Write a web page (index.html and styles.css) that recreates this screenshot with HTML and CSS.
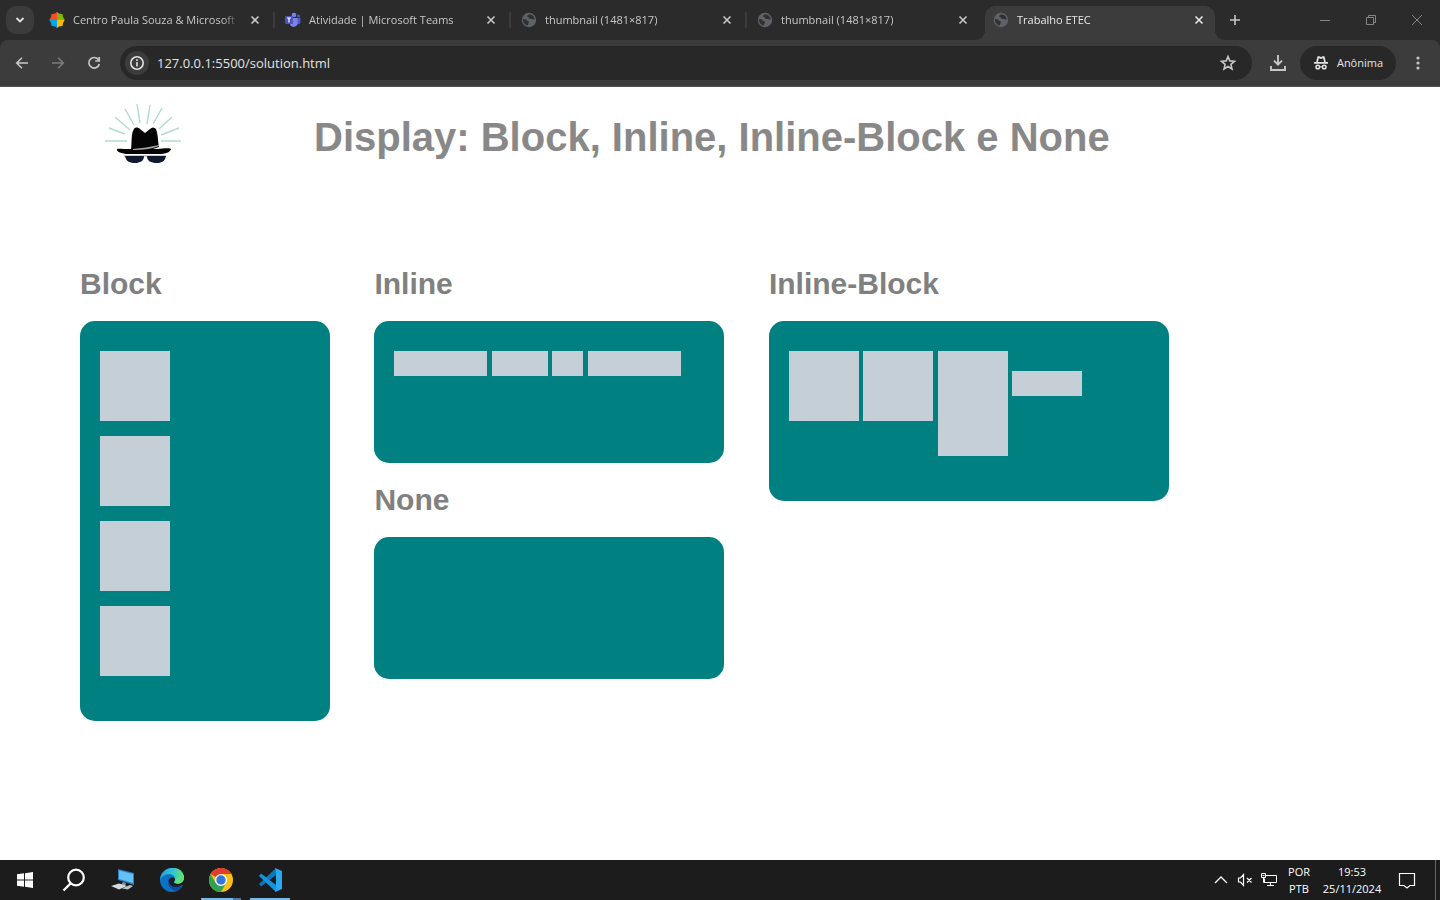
FILE: index.html
```html
<!DOCTYPE html>
<html lang="pt-BR">
<head>
<meta charset="utf-8">
<title>Trabalho ETEC</title>
<link rel="stylesheet" href="styles.css">
</head>
<body>
<svg class="defs" aria-hidden="true">
  <symbol id="close" viewBox="0 0 16 16"><path d="M4.500 4.500l7 7m0-7l-7 7" stroke="currentColor" stroke-width="1.600" fill="none"/></symbol>
  <symbol id="globe" viewBox="0 0 16 16"><circle cx="8" cy="8" r="7.200" fill="#5f6368"/><path d="M2 7c2-.4 3 .2 3.600 1.300.6 1 1.900.5 2.300 1.500.3.900-.6 1.300-.6 2.200l-.4 1.600C4 13.200 1.800 10.500 2 7zM8.300 2.300c-1.200.6-2.500 1.200-2.100 2.200.3.700 1.300.4 1.600 1.200.3.900 1.200 1.500 2.400 1.300 1-.2 1.700.7 3.600.6C13.700 5 11.300 2.400 8.300 2.300z" fill="#303134"/></symbol>
</svg>

<header class="browser">
  <nav class="tabstrip" aria-label="Guias">
    <button class="tab-search" aria-label="Pesquisar guias"><svg width="16" height="16" viewBox="0 0 16 16"><path d="M4.500 6l3.500 3.500L11.500 6" fill="none" stroke="currentColor" stroke-width="1.800"/></svg></button>
    <div class="tabs">
      <div class="tab">
        <svg class="favicon" viewBox="0 0 16 16"><path d="M8 0L5.500 1.700 2.500 2 2 5 .3 8H8z" fill="#f25022"/><path d="M8 0l2.500 1.700 3 .3.500 3 1.700 3H8z" fill="#7fba00"/><path d="M.3 8L2 11l.5 3 3 .3L8 16V8z" fill="#00a4ef"/><path d="M8 16l2.500-1.700 3-.3.500-3 1.700-3H8z" fill="#ffb900"/></svg>
        <span class="tab-title">Centro Paula Souza &amp; Microsoft</span>
        <button class="icon-btn" aria-label="Fechar"><svg><use href="#close"/></svg></button>
      </div>
      <div class="tab">
        <svg class="favicon" viewBox="0 0 16 16"><circle cx="9" cy="3" r="2.300" fill="#7b83eb"/><circle cx="13.500" cy="4" r="1.500" fill="#5059c9"/><path d="M11 6h4.500v4a2.500 2.500 0 0 1-4.500 1.500z" fill="#5059c9"/><path d="M5 6h7.500v5a4 4 0 0 1-7.500 1.800z" fill="#7b83eb"/><rect x="0" y="4" width="8" height="8" rx="1" fill="#4b53bc"/><path d="M2 6h4M4 6v4.500" stroke="#fff" stroke-width="1.200"/></svg>
        <span class="tab-title">Atividade | Microsoft Teams</span>
        <button class="icon-btn" aria-label="Fechar"><svg><use href="#close"/></svg></button>
      </div>
      <div class="tab">
        <svg class="favicon"><use href="#globe"/></svg>
        <span class="tab-title">thumbnail (1481×817)</span>
        <button class="icon-btn" aria-label="Fechar"><svg><use href="#close"/></svg></button>
      </div>
      <div class="tab">
        <svg class="favicon"><use href="#globe"/></svg>
        <span class="tab-title">thumbnail (1481×817)</span>
        <button class="icon-btn" aria-label="Fechar"><svg><use href="#close"/></svg></button>
      </div>
      <div class="tab tab-active">
        <svg class="favicon"><use href="#globe"/></svg>
        <span class="tab-title">Trabalho ETEC</span>
        <button class="icon-btn" aria-label="Fechar"><svg><use href="#close"/></svg></button>
      </div>
    </div>
    <button class="new-tab" aria-label="Nova guia"><svg width="16" height="16" viewBox="0 0 16 16"><path d="M8 3v10M3 8h10" stroke="currentColor" stroke-width="1.600"/></svg></button>
    <div class="window-controls">
      <button aria-label="Minimizar"><svg width="12" height="12" viewBox="0 0 12 12"><path d="M1 6.500h10" stroke="currentColor"/></svg></button>
      <button aria-label="Restaurar"><svg width="12" height="12" viewBox="0 0 12 12"><path d="M1.500 3.500h7v7h-7zM3.500 3.500v-2h7v7h-2" stroke="currentColor" fill="none"/></svg></button>
      <button aria-label="Fechar janela"><svg width="12" height="12" viewBox="0 0 12 12"><path d="M1 1l10 10M11 1L1 11" stroke="currentColor"/></svg></button>
    </div>
  </nav>
  <div class="toolbar">
    <div class="nav-buttons">
      <button aria-label="Voltar"><svg width="16" height="16" viewBox="0 0 16 16"><path d="M14 8H3M8 2.700L2.700 8 8 13.300" fill="none" stroke="currentColor" stroke-width="1.600"/></svg></button>
      <button aria-label="Avançar" disabled><svg width="16" height="16" viewBox="0 0 16 16"><path d="M2 8h11M8 2.700L13.300 8 8 13.300" fill="none" stroke="currentColor" stroke-width="1.600"/></svg></button>
      <button aria-label="Recarregar"><svg width="16" height="16" viewBox="0 0 16 16"><path d="M12.300 4.500A5.300 5.300 0 1 0 13.300 9M13.200 2v4H9.200" fill="none" stroke="currentColor" stroke-width="1.700"/></svg></button>
    </div>
    <div class="omnibox">
      <button class="site-info" aria-label="Informações do site"><svg width="16" height="16" viewBox="0 0 16 16"><circle cx="8" cy="8" r="6.200" fill="none" stroke="currentColor" stroke-width="1.600"/><path d="M8 7v4.500M8 4.300v1.700" stroke="currentColor" stroke-width="1.600"/></svg></button>
      <input class="address" type="text" aria-label="Endereço" value="127.0.0.1:5500/solution.html">
      <button class="star" aria-label="Favoritar"><svg width="18" height="18" viewBox="0 0 18 18"><path d="M9 2.500l1.800 4.400 4.700.4-3.600 3.100 1.100 4.600L9 12.500 5 15l1.100-4.600-3.600-3.100 4.700-.4z" fill="none" stroke="currentColor" stroke-width="1.600"/></svg></button>
    </div>
    <button class="download" aria-label="Downloads"><svg width="18" height="18" viewBox="0 0 18 18"><path d="M9 1v9.500M5 6.700l4 4 4-4M2 12v4h14v-4" fill="none" stroke="currentColor" stroke-width="1.900"/></svg></button>
    <button class="profile"><svg width="16" height="16" viewBox="0 0 16 16"><path d="M4 7l1.200-4.800h1L8 3l1.800-.8h1L12 7M1 7.800h14" fill="none" stroke="currentColor" stroke-width="1.700"/><circle cx="4.800" cy="12" r="1.800" fill="none" stroke="currentColor" stroke-width="1.500"/><circle cx="11.200" cy="12" r="1.800" fill="none" stroke="currentColor" stroke-width="1.500"/><path d="M6.500 11.800h3" stroke="currentColor"/></svg>Anônima</button>
    <button class="menu" aria-label="Menu"><svg width="16" height="16" viewBox="0 0 16 16" fill="currentColor"><circle cx="8" cy="3" r="1.600"/><circle cx="8" cy="8" r="1.600"/><circle cx="8" cy="13" r="1.600"/></svg></button>
  </div>
</header>

<div class="page">
  <div class="page-header">
    <svg class="logo" viewBox="0 0 80 68" role="img" aria-label="Chapéu e óculos">
      <path d="M0 38h22M4 25l16 6M10 14l15 13M20 6l9 16M32 1l3 19M45 2l-3 19M57 5l-9 16M67 14L54 26M74 25l-18 7M56 38h20" stroke="#b4dccd" stroke-width="1.500"/>
      <path d="M26 47c1-8 0-17 3-21 1-2 4-2 6 0l5 4 5-4c2-2 4-2 6 0 2 5 2 13 3 18l-12 4z" fill="#050505"/>
      <path d="M12 47c-1-2 3-1 14-1h26c8-1 14-1 14 0 0 3-6 5-12 5H24c-6 0-12-2-12-4z" fill="#050505"/>
      <path d="M28 46c9-1 18-2 26-4v1c-8 3-17 4-26 4z" fill="#aaa"/>
      <path d="M19 53h42" stroke="#999"/>
      <path d="M20 53h19c0 5-4 7-9 7-6 0-9-2-10-7zM42 53h19c-1 5-4 7-9 7-6 0-10-2-10-7z" fill="#101a2d"/>
    </svg>
    <h1>Display: Block, Inline, Inline-Block e None</h1>
  </div>
  <main class="examples">
    <section class="column narrow">
      <h2>Block</h2>
      <div class="panel block-demo">
        <div class="square"></div>
        <div class="square"></div>
        <div class="square"></div>
        <div class="square"></div>
      </div>
    </section>
    <section class="column medium">
      <h2>Inline</h2>
      <div class="panel short">
        <span class="bar long"></span>
        <span class="bar mid"></span>
        <span class="bar small"></span>
        <span class="bar long"></span>
      </div>
      <h2>None</h2>
      <div class="panel short"></div>
    </section>
    <section class="column wide">
      <h2>Inline-Block</h2>
      <div class="panel tall">
        <div class="box"></div>
        <div class="box"></div>
        <div class="box box-tall"></div>
        <div class="box box-low"></div>
      </div>
    </section>
  </main>
</div>

<footer class="taskbar">
  <div class="apps">
    <button aria-label="Iniciar"><svg width="16" height="16" viewBox="0 0 16 16" fill="#fff"><path d="M0 2.300L7 1.300v6.200H0zM8 1.200L16 0v7.500H8zM0 8.500h7v6.200l-7-1zM8 8.500h8V16l-8-1.200z"/></svg></button>
    <button aria-label="Pesquisar"><svg width="24" height="24" viewBox="0 0 24 24"><circle cx="14" cy="9.500" r="7.800" fill="none" stroke="#fff" stroke-width="2.200"/><path d="M8.500 15.500L1.500 22.500" stroke="#fff" stroke-width="2.400"/></svg></button>
    <button aria-label="Computador"><svg width="24" height="24" viewBox="0 0 24 24"><path d="M7 1l16 4v12L7 12z" fill="#2c80c0"/><path d="M8 2.500l14 3.500v9L8 11z" fill="#65bff8"/><path d="M12 14l3 1-1 3-4-1z" fill="#8b969e"/><path d="M0 18l8-2.500 8 2.500-8 3.500z" fill="#d5dbe0"/><path d="M11 20.500l8-3.500 3 1-5 3.500z" fill="#bcc5cc"/></svg></button>
    <button aria-label="Edge"><svg width="24" height="24" viewBox="0 0 24 24"><defs><linearGradient id="eg" x1="0" x2="1"><stop offset="0" stop-color="#249ce0"/><stop offset=".55" stop-color="#31c6d8"/><stop offset="1" stop-color="#68e45b"/></linearGradient></defs><circle cx="12" cy="12" r="12" fill="#0a72c4"/><path d="M0 12C1-4 24-4 24 10c0 5-5 7-9 5-2-1 0-2 0-4 0-6-11-7-15 1z" fill="url(#eg)"/><path d="M9 10c-3 6 1 12 8 13 2-1 4-2 5-5-6 2-12 0-13-8z" fill="#114a9b"/><path d="M24 11c-1 5-7 6-10 4-1-1 1-2 1-4-1-3-5-2-6 1-1 6 7 9 13 5l3 1z" fill="#1c1c1c"/><path d="M14.500 14.800c4 2 9 0 9.500-4.800V7l-6 2z" fill="#5de07a"/></svg></button>
    <button class="running stacked" aria-label="Chrome"><svg width="24" height="24" viewBox="0 0 24 24"><circle cx="12" cy="12" r="12" fill="#fbc116"/><path d="M12 12L1.600 6A12 12 0 0 1 22.400 6H12z" fill="#e33b2e"/><path d="M1.600 6A12 12 0 0 0 12 24l5.200-9L12 12 6.800 15z" fill="#31a350"/><circle cx="12" cy="12" r="6" fill="#fff"/><circle cx="12" cy="12" r="4.700" fill="#3475e0"/></svg></button>
    <button class="running" aria-label="Visual Studio Code"><svg width="24" height="24" viewBox="0 0 24 24"><path d="M18 0L1 16l2 2.500L18 7z" fill="#0878bd"/><path d="M18 24L1 8l2-2.500L18 17z" fill="#1594dc"/><path d="M17 0l7 3v18l-7 3 1-3V3z" fill="#29a9f2"/></svg></button>
  </div>
  <div class="tray">
    <button aria-label="Ícones ocultos"><svg width="14" height="14" viewBox="0 0 14 14"><path d="M1 10l6-6 6 6" fill="none" stroke="#fff" stroke-width="1.300"/></svg></button>
    <button aria-label="Som desativado"><svg width="16" height="16" viewBox="0 0 16 16"><path d="M1.500 6h2l3-3.500v11l-3-3.500h-2zM10 6l4.500 4.500m0-4.500L10 10.500" fill="none" stroke="#fff" stroke-width="1.200"/></svg></button>
    <button aria-label="Rede"><svg width="16" height="16" viewBox="0 0 16 16"><path d="M5 3.500h10.500v7H3.500v-4M9.500 10.500v3M6 13.500h7M.5 1.500h4v4h-4zM2.500 5.500v5h2M1.500 3.500h2" fill="none" stroke="#fff"/></svg></button>
    <button class="stack"><span>POR</span><span>PTB</span></button>
    <button class="stack clock"><span>19:53</span><span>25/11/2024</span></button>
    <button class="notifications" aria-label="Notificações"><svg width="18" height="18" viewBox="0 0 18 18"><path d="M1.500 2.500h15v12H12L9 17l-3-2.500H1.500z" fill="none" stroke="#fff" stroke-width="1.200"/></svg></button>
  </div>
</footer>
</body>
</html>
```

FILE: styles.css
```css
* {
  box-sizing: border-box;
}

body {
  margin: 0;
  min-height: 100vh;
  display: flex;
  flex-direction: column;
  background: #fff;
  font-family: "Liberation Sans", Arial, sans-serif;
}

button {
  display: flex;
  align-items: center;
  justify-content: center;
  flex: none;
  padding: 0;
  border: 0;
  background: none;
  color: inherit;
  font: inherit;
}

svg {
  flex: none;
}

.defs {
  position: absolute;
  width: 0;
  height: 0;
}

/* Browser window */

.browser {
  background: #2b2b2b;
  color: #c7c7c7;
  font: 11px/16px "Open Sans", "Noto Sans", sans-serif;
}

.tabstrip {
  display: flex;
  align-items: center;
  height: 40px;
  padding-left: 6px;
}

.tab-search {
  width: 28px;
  height: 28px;
  border-radius: 10px;
  background: #3c3c3c;
  color: #e3e3e3;
}

.tabs {
  display: flex;
  flex: 0 1 1174px;
  gap: 6px;
  min-width: 0;
  margin-left: 7px;
  align-self: stretch;
}

.tab {
  position: relative;
  display: flex;
  flex: 1;
  align-items: center;
  gap: 8px;
  min-width: 0;
  padding: 0 8px;
}

.tab:not(.tab-active):not(:nth-child(4))::after {
  content: "";
  position: absolute;
  right: -4px;
  top: 12px;
  width: 2px;
  height: 16px;
  background: #3c3c3c;
}

.favicon {
  width: 16px;
  height: 16px;
}

.tab-title {
  flex: 1;
  overflow: hidden;
  white-space: nowrap;
  mask-image: linear-gradient(to left, transparent, #000 16px);
}

.icon-btn {
  width: 16px;
  height: 16px;
}

.icon-btn svg {
  width: 16px;
  height: 16px;
}

.tab-active {
  margin-top: 6px;
  padding-bottom: 6px;
  border-radius: 10px 10px 0 0;
  background: #3c3c3c;
  color: #e8e8e8;
}

.tab-active::before,
.tab-active::after {
  content: "";
  position: absolute;
  bottom: 0;
  width: 10px;
  height: 10px;
}

.tab-active::before {
  right: 100%;
  background: radial-gradient(circle at 0 0, transparent 10px, #3c3c3c 10px);
}

.tab-active::after {
  left: 100%;
  background: radial-gradient(circle at 100% 0, transparent 10px, #3c3c3c 10px);
}

.new-tab {
  width: 28px;
  height: 28px;
  margin-left: 6px;
}

.window-controls {
  display: flex;
  margin-left: auto;
  align-self: stretch;
  color: #858585;
}

.window-controls button {
  width: 46px;
}

.toolbar {
  display: flex;
  align-items: center;
  height: 47px;
  padding: 0 8px;
  border-bottom: 1px solid #505050;
  border-radius: 8px 8px 0 0;
  background: #3c3c3c;
}

.nav-buttons {
  display: flex;
  gap: 8px;
}

.nav-buttons button {
  width: 28px;
  height: 28px;
}

.nav-buttons button:disabled {
  color: #7b7b7b;
}

.omnibox {
  display: flex;
  flex: 1;
  align-items: center;
  height: 34px;
  margin-left: 12px;
  padding: 0 15px 0 5px;
  border-radius: 17px;
  background: #282828;
}

.site-info {
  width: 24px;
  height: 24px;
  border-radius: 50%;
  background: #3c3c3c;
  color: #e3e3e3;
}

.address {
  flex: 1;
  min-width: 0;
  margin-left: 8px;
  padding: 0;
  border: 0;
  outline: 0;
  background: none;
  color: #e3e3e3;
  font: 13px/20px "Open Sans", "Noto Sans", sans-serif;
}

.download {
  width: 28px;
  height: 28px;
  margin: 0 8px 0 12px;
}

.profile {
  gap: 8px;
  width: 96px;
  height: 34px;
  border-radius: 17px;
  background: #282828;
  color: #e3e3e3;
}

.menu {
  width: 28px;
  height: 28px;
  margin-left: 8px;
}

/* Page content */

.page {
  flex: 1;
  color: #808080;
}

.page-header {
  display: flex;
  align-items: center;
  height: 160px;
  padding: 0 105px 60px;
}

.logo {
  width: 80px;
  height: 68px;
}

h1 {
  margin: 0 0 0 129px;
  color: #888;
  font-size: 40px;
  line-height: 48px;
}

.examples {
  padding-left: 80px;
}

.column {
  display: inline-block;
  margin-right: 40px;
  vertical-align: top;
}

.narrow {
  width: 250px;
}

.medium {
  width: 350px;
}

.wide {
  width: 400px;
}

h2 {
  margin: 20px 0;
  font-size: 30px;
  line-height: 34px;
}

.panel {
  padding: 30px 20px;
  border-radius: 15px;
  background: #008080;
}

.block-demo {
  min-height: 400px;
}

.short {
  min-height: 142px;
}

.tall {
  min-height: 180px;
}

.square {
  width: 70px;
  height: 70px;
  margin-bottom: 15px;
  background: #c5cfd8;
}

.bar,
.box {
  display: inline-block;
  vertical-align: top;
  background: #c5cfd8;
}

.bar {
  height: 25px;
}

.long {
  width: 93px;
}

.mid {
  width: 56px;
}

.small {
  width: 31px;
}

.box {
  width: 70px;
  height: 70px;
}

.box-tall {
  height: 105px;
}

.box-low {
  height: 25px;
  margin-top: 20px;
}

/* Desktop taskbar */

.taskbar {
  display: flex;
  justify-content: space-between;
  height: 40px;
  background: #1c1c1c;
  color: #fff;
  font: 11px/17px "Open Sans", "Noto Sans", sans-serif;
}

.apps,
.tray {
  display: flex;
}

.apps {
  gap: 1px;
  padding-left: 1px;
}

.apps button {
  width: 48px;
}

.running {
  box-shadow: inset 0 -2px #76b9ed;
}

.apps .running {
  width: 40px;
  margin: 0 4px;
}

.stacked {
  position: relative;
}

.stacked::after {
  content: "";
  position: absolute;
  right: 0;
  bottom: 0;
  width: 8px;
  height: 2px;
  background: #56789c;
}

.tray {
  margin-right: 4px;
  border-right: 1px solid #666;
}

.tray button {
  width: 24px;
}

.tray .stack {
  flex-direction: column;
  width: 36px;
}

.tray .clock {
  width: 70px;
}

.tray .notifications {
  width: 40px;
  margin-right: 8px;
}
```
